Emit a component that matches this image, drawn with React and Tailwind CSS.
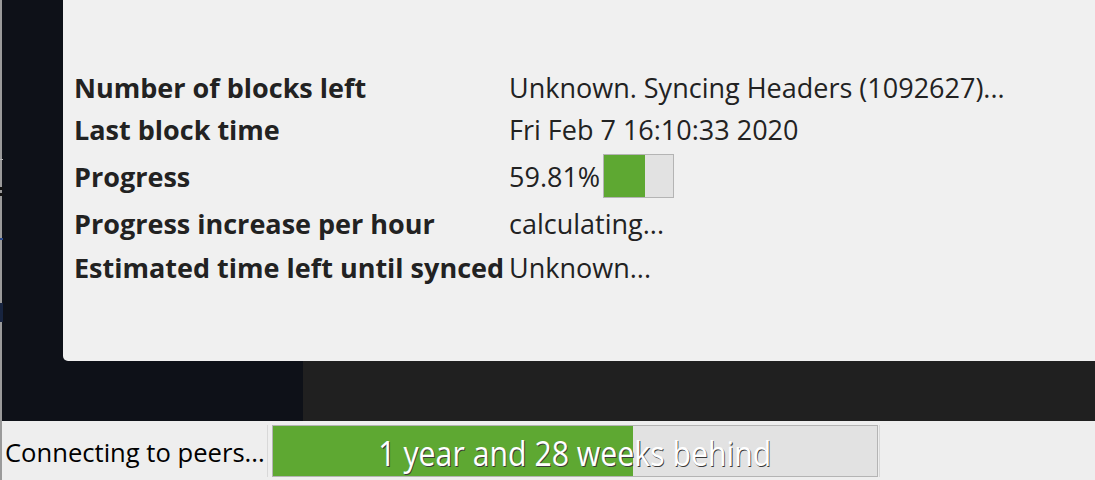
const ROWS = [
  { label: 'Number of blocks left', value: 'Unknown. Syncing Headers (1092627)...', h: 'h-[42px]' },
  { label: 'Last block time', value: 'Fri Feb 7 16:10:33 2020', h: 'h-[42px]' },
  { label: 'Progress', value: '59.81%', bar: 59.81, h: 'h-[52px]' },
  { label: 'Progress increase per hour', value: 'calculating...', h: 'h-[42px]' },
  { label: 'Estimated time left until synced', value: 'Unknown...', h: 'h-[46px]' },
];

function SmallBar({ pct }) {
  return (
    <div className="ml-[3px] h-[44px] w-[71px] border border-[#b4b4b4] bg-[#e2e2e2]">
      <div className="h-full bg-[#5ea832]" style={{ width: `${pct}%` }} />
    </div>
  );
}

export default function App() {
  return (
    <div className="flex h-[480px] w-[1095px] overflow-hidden bg-[#eeeeee] font-['Open_Sans',sans-serif]">
      {/* left window edge */}
      <div className="relative h-full w-[2px] shrink-0 bg-[#9a9a9a]">
        <div className="absolute left-0 top-[159px] h-[1px] w-[3px] bg-[#b8b8b8]" />
        <div className="absolute left-0 top-[187px] h-[3px] w-[3px] bg-[#111]" />
        <div className="absolute left-0 top-[193px] h-[3px] w-[3px] bg-[#111]" />
        <div className="absolute left-0 top-[238px] h-[2px] w-[3px] bg-[#2b4a8a]" />
        <div className="absolute left-0 top-[303px] h-[19px] w-[3px] bg-[#17243f]" />
      </div>

      <div className="flex min-w-0 flex-1 flex-col">
        <div className="flex h-[361px] bg-[#0e1118]">
          <div className="w-[61px] shrink-0" />
          <div className="flex-1 rounded-bl-[5px] bg-[#f0f0f0] pl-[11px] pt-[66px] text-[27px] leading-none text-[#222]">
            {ROWS.map((r) => (
              <div key={r.label} className={`flex items-center ${r.h}`}>
                <div className="w-[435px] shrink-0 whitespace-nowrap font-bold">{r.label}</div>
                <div className="flex items-center whitespace-nowrap">
                  <span>{r.value}</span>
                  {r.bar != null && <SmallBar pct={r.bar} />}
                </div>
              </div>
            ))}
          </div>
        </div>

        <div className="flex h-[60px]">
          <div className="w-[301px] shrink-0 bg-[#0e1118]" />
          <div className="flex-1 bg-[#202020]" />
        </div>

        <div className="flex h-[59px] items-center bg-[#eeeeee]">
          <div className="w-[265px] shrink-0 whitespace-nowrap pl-[3px] pt-[4px] text-[25.6px] leading-none text-black">Connecting to peers...</div>
          <div className="h-[52px] w-[1px] bg-[#d8d8d8]" />
          <div className="relative ml-[4px] h-[52px] w-[606px] border border-[#b4b4b4] bg-[#e2e2e2]">
            <div className="h-full bg-[#5ea832]" style={{ width: '59.6%' }} />
            <div className="absolute inset-0 flex items-center justify-center pt-[4px]">
              <span className="inline-block origin-center scale-x-[0.89] whitespace-nowrap text-[34px] leading-none text-white [text-shadow:1px_1px_0_#3a3a3a]">
                1 year and 28 weeks behind
              </span>
            </div>
          </div>
          <div className="ml-[1px] h-[52px] w-[1px] bg-[#d8d8d8]" />
        </div>
      </div>
    </div>
  );
}
